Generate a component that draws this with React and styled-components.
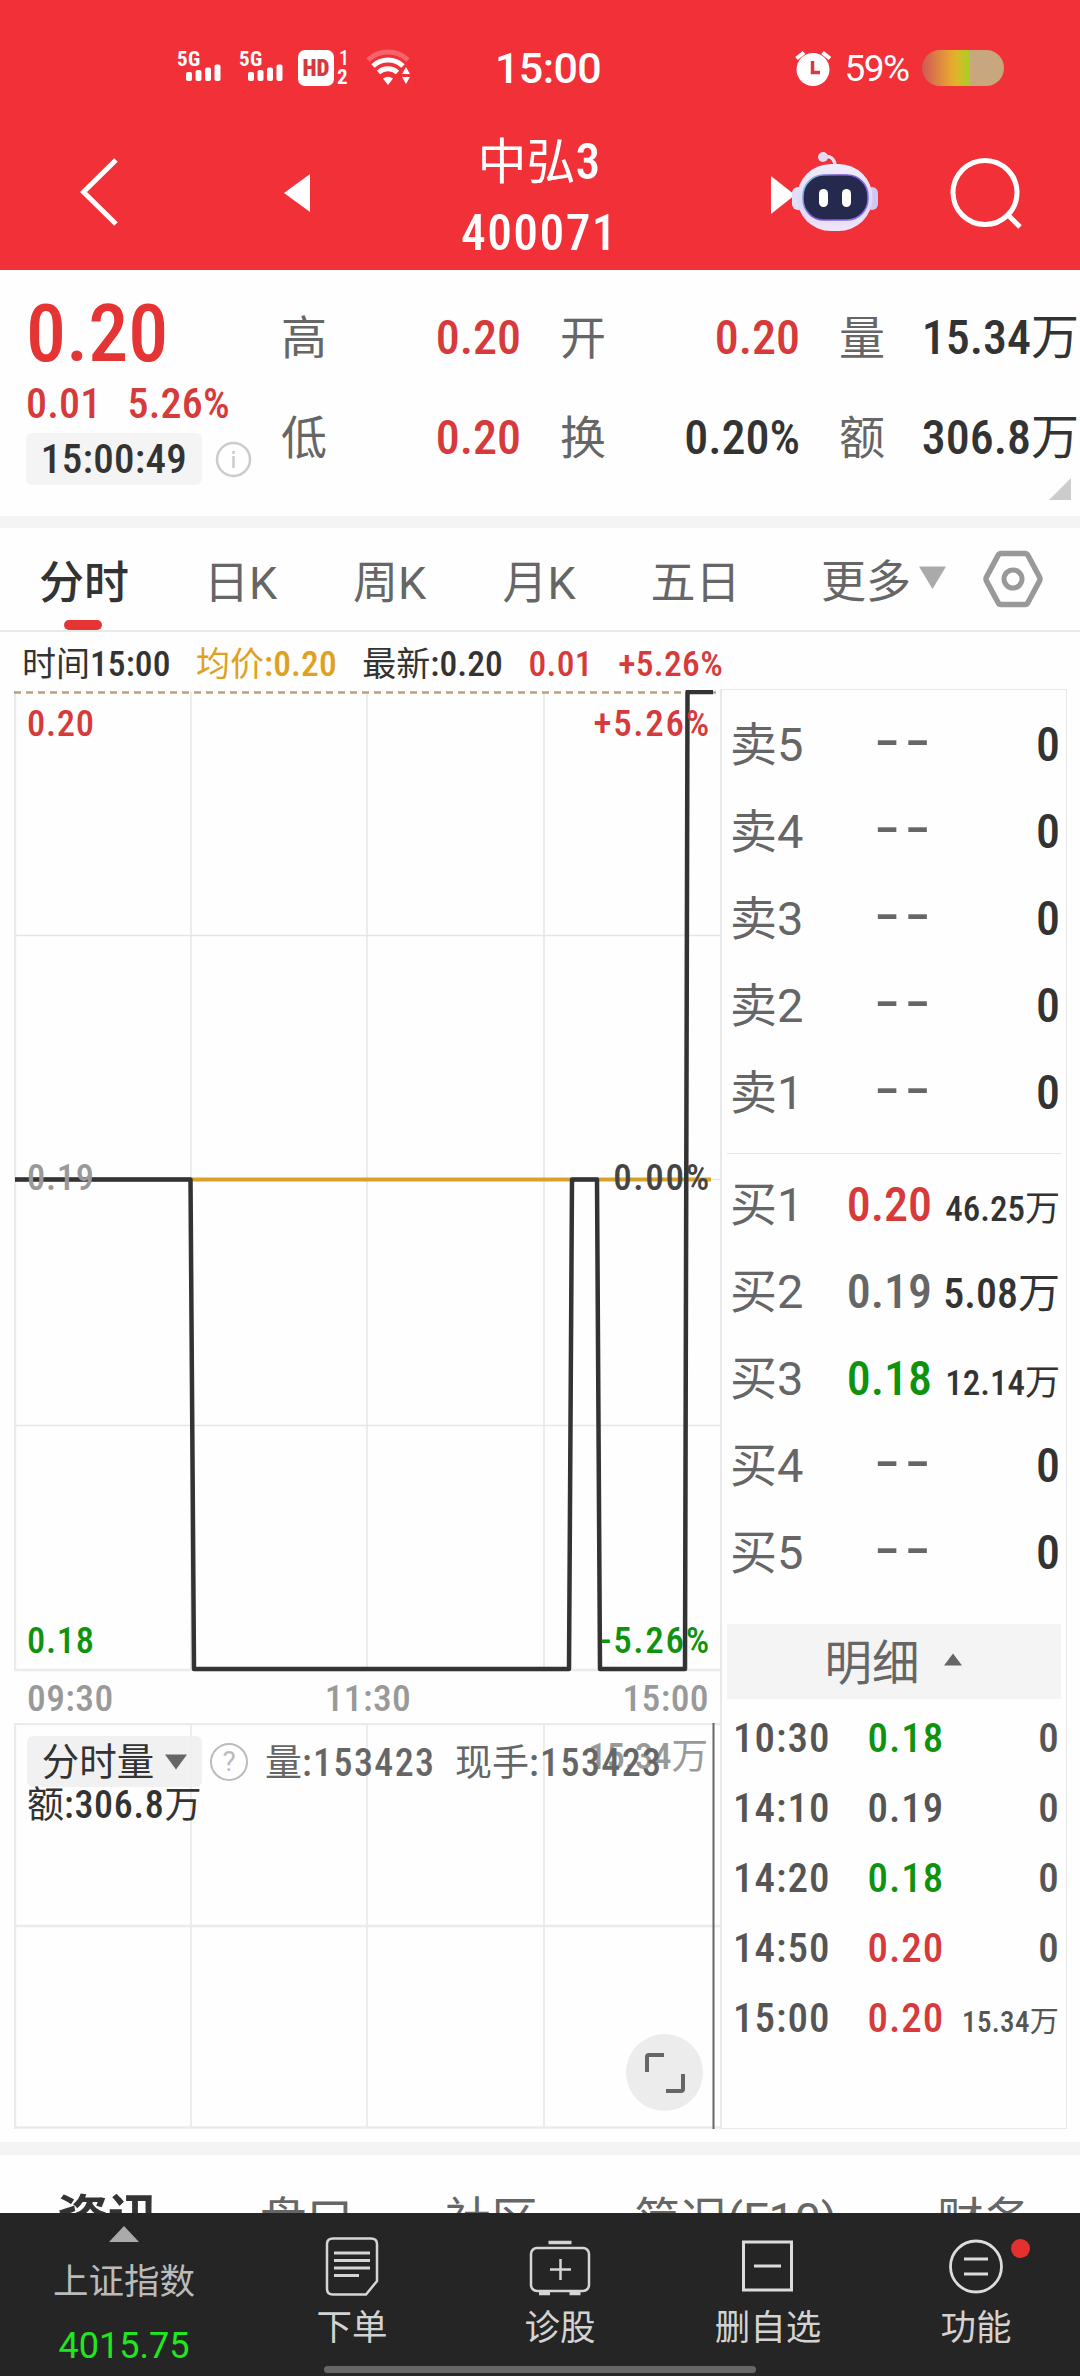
import styled, { createGlobalStyle } from "styled-components";

const RED = "#d63a3a";
const GREEN = "#0f930f";

const times = [
    { time: "10:30", price: "0.18", color: GREEN, amount: "0" },
    { time: "14:10", price: "0.19", color: "#555", amount: "0" },
    { time: "14:20", price: "0.18", color: GREEN, amount: "0" },
    { time: "14:50", price: "0.20", color: RED, amount: "0" },
    { time: "15:00", price: "0.20", color: RED, amount: "15.34万", size: 29 },
];

const sells = ["卖5", "卖4", "卖3", "卖2", "卖1"].map((name) => ({ name, amount: "0" }));

const buys = [
    { name: "买1", price: "0.20", color: RED, amount: "46.25万", size: 35 },
    { name: "买2", price: "0.19", color: "#666", amount: "5.08万", size: 42 },
    { name: "买3", price: "0.18", color: GREEN, amount: "12.14万", size: 35 },
    { name: "买4", amount: "0" },
    { name: "买5", amount: "0" },
];

const figures = [
    [{ label: "高", value: "0.20", color: RED }, { label: "开", value: "0.20", color: RED }, { label: "量", value: "15.34万" }],
    [{ label: "低", value: "0.20", color: RED }, { label: "换", value: "0.20%" }, { label: "额", value: "306.8万" }],
];

const Num = ({ children }) => {
    const [digits, unit] = children.split("万");
    return <>{digits}{unit !== undefined && <Unit>万</Unit>}</>;
};

const Signal = () => (
    <SignalBox>
        <span>5G</span>
        <svg width="36" height="18" fill="#fff">
            <rect x="0" y="8" width="6" height="9" rx="2" />
            <rect x="9.5" y="6" width="6" height="11" rx="2" />
            <rect x="19" y="3.500" width="6" height="13.500" rx="2" />
            <rect x="28.500" y="0.500" width="6" height="16.500" rx="2" />
        </svg>
    </SignalBox>
);

const StatusBar = () => (
    <Status>
        <Signals>
            <Signal />
            <Signal />
            <Hd>HD</Hd>
            <Sims><span>1</span><b>2</b></Sims>
            <svg width="46" height="38" viewBox="0 0 46 38" fill="none">
                <path d="M2 11 A29 29 0 0 1 42 11" stroke="#fff" strokeOpacity="0.25" strokeWidth="5" />
                <path d="M7 17 A22 22 0 0 1 37 17" stroke="#fff" strokeWidth="5" />
                <path d="M12.500 23.500 A14 14 0 0 1 31.500 23.500" stroke="#fff" strokeWidth="5" />
                <path d="M17 29.500 Q22 26 27 29.500 L22 36 Z" fill="#fff" />
                <path d="M40 18 L44 25 H36 Z M40 35 L44 28 H36 Z" fill="#fff" />
            </svg>
        </Signals>
        <Clock>15:00</Clock>
        <Power>
            <svg width="36" height="38" viewBox="0 0 36 38">
                <circle cx="18" cy="20.500" r="16.500" fill="#fff" />
                <path d="M1.500 9.500 L9 3.500 M27.500 3.500 L35 9.500" stroke="#fff" strokeWidth="4" />
                <path d="M17.500 12 V23.500 H25" stroke="#d83a3e" strokeWidth="3.500" fill="none" />
            </svg>
            <span>59%</span>
            <Battery />
        </Power>
    </Status>
);

const Robot = () => (
    <svg width="110" height="90" viewBox="768 146 110 90">
        <defs>
            <linearGradient id="shell" x1="0" y1="0" x2="0" y2="1">
                <stop offset="0" stopColor="#f1edfb" />
                <stop offset="0.6" stopColor="#dcd8f6" />
                <stop offset="1" stopColor="#f0e6fa" />
            </linearGradient>
            <linearGradient id="rim" x1="0" y1="0" x2="1" y2="0.4">
                <stop offset="0" stopColor="#7fd6e2" />
                <stop offset="0.45" stopColor="#7a4fd0" />
                <stop offset="1" stopColor="#8a6cf0" />
            </linearGradient>
        </defs>
        <path d="M770 174 L794 193 L770 212 Z" fill="#fff" />
        <path d="M822 155 Q833 152 834.500 165" stroke="#e9e0f6" strokeWidth="3.500" fill="none" />
        <circle cx="822" cy="155" r="5" fill="#e2daf2" />
        <rect x="791" y="185" width="12" height="23" rx="6" fill="#e3def8" />
        <rect x="865" y="185" width="12" height="23" rx="6" fill="#cfc8f5" />
        <rect x="796" y="162" width="75.500" height="67" rx="34" fill="url(#shell)" />
        <rect x="802" y="173" width="65" height="45" rx="21" fill="#24294d" stroke="url(#rim)" strokeWidth="1.500" />
        <rect x="818" y="187" width="9" height="18" rx="4.500" fill="#fff" />
        <rect x="841" y="187" width="9" height="18" rx="4.500" fill="#fff" />
    </svg>
);

const Header = () => (
    <Top>
        <StatusBar />
        <TitleBar>
            <svg width="44" height="76" viewBox="0 0 44 76">
                <path d="M38 5 L5.500 37 L38 69" fill="none" stroke="#fff" strokeWidth="5" />
            </svg>
            <Prev width="26" height="38"><path d="M26 0 V38 L0 19 Z" fill="#fff" /></Prev>
            <Title>
                <div>中弘<b>3</b></div>
                <div><b>400071</b></div>
            </Title>
            <Robot />
            <svg width="76" height="76" viewBox="946 155 76 76">
                <circle cx="984" cy="192.500" r="32" fill="none" stroke="#fff" strokeWidth="5" />
                <path d="M1007 215 L1019 227" stroke="#fff" strokeWidth="5" />
            </svg>
        </TitleBar>
    </Top>
);

const Summary = () => (
    <Quote>
        <Latest>
            <Big>0.20</Big>
            <Change><span>0.01</span><span>5.26%</span></Change>
            <Stamp>
                <span>15:00:49</span>
                <svg width="37" height="37" fill="none" stroke="#ccc" strokeWidth="2.500">
                    <circle cx="18.500" cy="18.500" r="16.500" />
                    <path d="M18.500 10 V13 M18.500 15 V27" />
                </svg>
            </Stamp>
        </Latest>
        <Figures>
            {figures.map((row, index) => (
                <FigureRow key={index}>
                    {row.map((item) => (
                        <Figure key={item.label}>
                            <FigureName>{item.label}</FigureName>
                            <FigureValue $color={item.color}><Num>{item.value}</Num></FigureValue>
                        </Figure>
                    ))}
                </FigureRow>
            ))}
        </Figures>
        <Corner width="22" height="22"><path d="M22 0 V22 H0 Z" fill="#ccc" /></Corner>
    </Quote>
);

const Periods = () => (
    <Tabs>
        <Tab $active $w={124}>分时</Tab>
        <Tab $w={189}>日K</Tab>
        <Tab $w={109}>周K</Tab>
        <Tab $w={190}>月K</Tab>
        <Tab $w={123}>五日</Tab>
        <More>
            更多
            <svg width="28" height="24"><path d="M0 0.500 H27 L13.500 23 Z" fill="#aaa" /></svg>
        </More>
        <svg width="60" height="58" viewBox="0 0 60 58" fill="none" stroke="#999">
            <path d="M18 3.500 H42 Q44 3.500 45 5.500 L56.500 27 Q57.500 29 56.500 31 L45 52.500 Q44 54.500 42 54.500 H18 Q16 54.500 15 52.500 L3.500 31 Q2.500 29 3.500 27 L15 5.500 Q16 3.500 18 3.500 Z" strokeWidth="5.500" />
            <circle cx="30" cy="29" r="9" strokeWidth="5" />
        </svg>
    </Tabs>
);

const PriceChart = () => (
    <Chart width="706" height="982" viewBox="14 690 706 982">
        <path d="M15 935.500 H720 M15 1179.500 H720 M15 1425.500 H720 M191 692 V1670 M367 692 V1670 M544 692 V1670" stroke="#e6e6e6" strokeWidth="1.500" />
        <path d="M15 691 V1671 M14 1670 H720" stroke="#ebebeb" strokeWidth="2.500" />
        <path d="M14 692.500 H716" stroke="#b9a17c" strokeWidth="2.500" strokeDasharray="7 5" />
        <path d="M15 1179.500 H711" stroke="#d9a02c" strokeWidth="4" />
        <path d="M15 1179.500 H190.500 L194 1669 H569 L572 1179.500 H597 L600 1669 H685 L687.500 692 H713" fill="none" stroke="#333" strokeWidth="4.500" strokeLinejoin="round" />
        <text x="27" y="736" fill={RED}>0.20</text>
        <WideText x="711" y="736" fill={RED}>+5.26%</WideText>
        <text x="27" y="1190" fill="#999">0.19</text>
        <WideText x="711" y="1190" fill="#444">0.00%</WideText>
        <text x="27" y="1653" fill={GREEN}>0.18</text>
        <WideText x="711" y="1653" fill={GREEN}>-5.26%</WideText>
    </Chart>
);

const Volume = () => (
    <VolumeBox>
        <Grid width="706" height="406" viewBox="14 1723 706 406">
            <path d="M191 1724 V2128 M367 1724 V2128 M544 1724 V2128" stroke="#e6e6e6" strokeWidth="1.500" />
            <path d="M15 1723 V2129 M14 1724 H720 M14 1926 H720 M14 2127.500 H720" stroke="#ebebeb" strokeWidth="2.500" />
            <path d="M713.500 1723 V2129" stroke="#666" strokeWidth="2" />
        </Grid>
        <Peak><Num>15.34万</Num></Peak>
        <VolumeRow>
            <Picker>
                分时量
                <svg width="22" height="16"><path d="M0 0.500 H22 L11 15.500 Z" fill="#666" /></svg>
            </Picker>
            <Help>?</Help>
            <Stat $w={190}>量<b>:153423</b></Stat>
            <Stat>现手<b>:153423</b></Stat>
        </VolumeRow>
        <Turnover>额<b>:306.8</b>万</Turnover>
        <Expand>
            <svg width="42" height="42" fill="none" stroke="#666" strokeWidth="4">
                <path d="M3 20 V5 Q3 3 5 3 H20 M22 39 H37 Q39 39 39 37 V22" />
            </svg>
        </Expand>
    </VolumeBox>
);

const Order = ({ item }) => (
    <OrderRow>
        <OrderName>{item.name}</OrderName>
        {item.price ? <Price $color={item.color}>{item.price}</Price> : <Dashes>--</Dashes>}
        <Amount $size={item.size}><Num>{item.amount}</Num></Amount>
    </OrderRow>
);

const Book = () => (
    <BookPanel>
        {sells.map((item) => <Order key={item.name} item={item} />)}
        <Divider />
        {buys.map((item) => <Order key={item.name} item={item} />)}
        <DetailHead>
            明细
            <svg width="18" height="13"><path d="M0 12.500 L9 0.500 L18 12.500 Z" fill="#666" /></svg>
        </DetailHead>
        {times.map((item) => (
            <TradeRow key={item.time}>
                <span>{item.time}</span>
                <TradePrice $color={item.color}>{item.price}</TradePrice>
                <TradeAmount $size={item.size}><Num>{item.amount}</Num></TradeAmount>
            </TradeRow>
        ))}
    </BookPanel>
);

const BottomNav = () => (
    <Nav>
        <Index>
            <svg width="30" height="17"><path d="M0 17 L15 1 L30 17 Z" fill="#aaa" /></svg>
            <span>上证指数</span>
            <IndexValue>4015.75</IndexValue>
        </Index>
        <NavItem>
            <svg width="64" height="64" fill="none" stroke="#d5d5d5" strokeWidth="2.500">
                <path d="M13 5.500 H51 Q57 5.500 57 11 V48 L46 61.500 H13 Q7 61.500 7 56 V11 Q7 5.500 13 5.500 Z" />
                <path d="M14 20 H50 M14 27.500 H50 M14 35 H50 M14 42.500 H39" strokeWidth="3" />
            </svg>
            下单
        </NavItem>
        <NavItem>
            <svg width="64" height="64" fill="none" stroke="#d5d5d5" strokeWidth="2.500">
                <rect x="3" y="15" width="58" height="43" rx="6" />
                <path d="M20.500 9.500 H43.500 M11 60.500 H22 M41.500 60.500 H52.500" strokeWidth="3.500" />
                <path d="M22 36.500 H43 M32.500 26 V47" />
            </svg>
            诊股
        </NavItem>
        <NavItem>
            <svg width="64" height="64" fill="none" stroke="#dcdcdc" strokeWidth="3">
                <rect x="7.500" y="9" width="48" height="48" />
                <path d="M18 33 H45" />
            </svg>
            删自选
        </NavItem>
        <NavItem>
            <svg width="64" height="64" fill="none" stroke="#dcdcdc" strokeWidth="2.800">
                <circle cx="32" cy="33.500" r="25.500" />
                <path d="M20 26 H44 M20 41 H44" />
            </svg>
            功能
            <Dot />
        </NavItem>
        <HomeBar />
    </Nav>
);

export default function App() {
    return (
        <Page>
            <Global />
            <Header />
            <Summary />
            <Gap $h={12} />
            <Periods />
            <Prices>
                <span>时间<b>15:00</b></span>
                <Avg>均价<b>:0.20</b></Avg>
                <span>最新<b>:0.20</b></span>
                <Up>0.01</Up>
                <Up>+5.26%</Up>
            </Prices>
            <Main>
                <Charts>
                    <PriceChart />
                    <Axis><span>09:30</span><span>11:30</span><span>15:00</span></Axis>
                    <Volume />
                </Charts>
                <Book />
            </Main>
            <Gap $h={13} />
            <News>
                <NewsTab $active $w={203}>资讯</NewsTab>
                <NewsTab $w={185}>盘口</NewsTab>
                <NewsTab $w={189}>社区</NewsTab>
                <NewsTab $w={303}>简况(F10)</NewsTab>
                <NewsTab $w={94}>财务</NewsTab>
            </News>
            <BottomNav />
        </Page>
    );
}

const Global = createGlobalStyle`
    * {
        box-sizing: border-box;
    }
    body {
        margin: 0;
        background: #fff;
    }
    svg {
        display: block;
        flex-shrink: 0;
    }
    b {
        font-family: "Roboto Condensed", Roboto, sans-serif;
        font-weight: 500;
    }
`;

const digits = `
    font-family: "Roboto Condensed", Roboto, "Noto Sans CJK SC", sans-serif;
    font-weight: 500;
`;

const Page = styled.div`
    width: 1080px;
    height: 2376px;
    overflow: hidden;
    display: flex;
    flex-direction: column;
    background: #fefefe;
    color: #333;
    font-family: Roboto, "Noto Sans CJK SC", sans-serif;
    white-space: nowrap;
`;

const Unit = styled.span`
    font-weight: 400;
`;

const Top = styled.header`
    height: 270px;
    flex-shrink: 0;
    background: #f13038;
    color: #fff;
`;

const Status = styled.div`
    height: 134px;
    padding: 2px 76px 0 177px;
    display: grid;
    grid-template-columns: 318px 300px 1fr;
    align-items: center;
`;

const Signals = styled.div`
    display: flex;
    align-items: center;
`;

const SignalBox = styled.div`
    width: 62px;
    height: 38px;
    display: flex;
    flex-direction: column;
    span {
        height: 17px;
        font: bold 21px/20px "Roboto Condensed", sans-serif;
        letter-spacing: 0.5px;
    }
    svg {
        margin-left: 9px;
        margin-top: -2px;
    }
`;

const Hd = styled.div`
    width: 36px;
    height: 36px;
    margin-left: -3px;
    border-radius: 7px;
    background: #fff;
    color: #d8383d;
    text-align: center;
    font: 900 23px/37px "Roboto Condensed", sans-serif;
`;

const Sims = styled.div`
    width: 32px;
    display: flex;
    flex-direction: column;
    padding-left: 3px;
    font: 500 20px/19px "Roboto Condensed", sans-serif;
    b {
        font-weight: 700;
        font-size: 21px;
    }
    span {
        padding-left: 2px;
    }
`;

const Clock = styled.div`
    font-size: 43px;
    font-weight: 500;
    letter-spacing: -0.6px;
`;

const Power = styled.div`
    display: flex;
    align-items: center;
    justify-content: space-between;
    span {
        font-size: 37px;
        letter-spacing: -1.5px;
    }
`;

const Battery = styled.div`
    width: 82px;
    height: 36px;
    border-radius: 18px;
    background: linear-gradient(90deg, #d0585a 0, #e6a530 35%, #dfb52c 42%, #a6d022 58%, #c9a77e 58%);
`;

const TitleBar = styled.div`
    height: 136px;
    display: flex;
    align-items: center;
    padding: 0 57px 18px 78px;
`;

const Prev = styled.svg`
    margin-left: 162px;
`;

const Title = styled.div`
    width: 459px;
    padding: 9px 0 0;
    text-align: center;
    font-size: 49px;
    line-height: 71px;
    b {
        letter-spacing: 1.4px;
        font-size: 49.5px;
    }
    & + svg {
        margin-right: 68px;
    }
`;

const Quote = styled.section`
    position: relative;
    height: 246px;
    flex-shrink: 0;
    display: flex;
`;

const Latest = styled.div`
    ${digits}
    width: 281px;
    padding: 24px 0 0 26px;
    color: ${RED};
`;

const Big = styled.div`
    color: #e53434;
    font-size: 80px;
    line-height: 80px;
`;

const Change = styled.div`
    display: flex;
    gap: 26px;
    font-size: 42px;
    line-height: 59px;
    letter-spacing: 0.2px;
`;

const Stamp = styled.div`
    display: flex;
    align-items: center;
    gap: 13px;
    color: #333;
    span {
        width: 176px;
        height: 52px;
        border-radius: 6px;
        background: #f4f4f4;
        text-align: center;
        font-size: 41px;
        line-height: 53px;
        letter-spacing: 0.3px;
    }
`;

const Figures = styled.div`
    width: 798px;
    padding-top: 17px;
`;

const FigureRow = styled.div`
    display: flex;
    justify-content: space-between;
`;

const Figure = styled.div`
    width: 240px;
    height: 100px;
    display: flex;
    align-items: baseline;
    justify-content: space-between;
    line-height: 101px;
`;

const FigureName = styled.div`
    font-size: 46px;
    color: #666;
`;

const FigureValue = styled.div`
    ${digits}
    color: ${(p) => p.$color || "#333"};
    font-size: 48px;
`;

const Corner = styled.svg`
    position: absolute;
    right: 9px;
    bottom: 16px;
`;

const Gap = styled.div`
    height: ${(p) => p.$h}px;
    flex-shrink: 0;
    background: #f4f4f4;
`;

const Tabs = styled.nav`
    height: 104px;
    flex-shrink: 0;
    display: flex;
    align-items: center;
    border-bottom: 2px solid #e8e8e8;
    padding-left: 22px;
    font-size: 45px;
    color: #666;
`;

const Tab = styled.div`
    position: relative;
    width: ${(p) => p.$w}px;
    height: 102px;
    line-height: 111px;
    text-align: center;
    ${(p) => p.$active && `
        color: #333;
        font-weight: 500;
        &::after {
            content: "";
            position: absolute;
            left: 42px;
            bottom: 0;
            width: 38px;
            height: 10px;
            border-radius: 5px;
            background: #e53434;
        }
    `}
`;

const More = styled.div`
    display: flex;
    align-items: center;
    gap: 8px;
    width: 162px;
    margin-left: 64px;
    height: 102px;
    line-height: 111px;
    padding-top: 7px;
    svg {
        margin-top: -9px;
    }
`;

const Prices = styled.div`
    height: 58px;
    flex-shrink: 0;
    padding: 5px 0 0 22px;
    display: flex;
    gap: 25.5px;
    align-items: center;
    font-size: 34px;
    line-height: 58px;
    b {
        font-size: 35.5px;
        letter-spacing: 0.1px;
    }
`;

const Avg = styled.span`
    color: #e0a020;
`;

const Up = styled.span`
    ${digits}
    font-size: 35.5px;
    letter-spacing: 0.3px;
    color: ${RED};
`;

const Main = styled.main`
    display: flex;
    height: 1452px;
    flex-shrink: 0;
    padding-left: 14px;
`;

const Charts = styled.div`
    width: 706px;
`;

const Chart = styled.svg`
    text {
        ${digits}
        font-size: 36.5px;
        letter-spacing: 0.7px;
    }
`;

const WideText = styled.text`
    && {
        font-size: 37px;
        letter-spacing: 1.7px;
        text-anchor: end;
    }
`;

const Axis = styled.div`
    ${digits}
    height: 51px;
    display: grid;
    grid-template-columns: 1fr 1fr 1fr;
    padding: 0 11px 0 13px;
    font-size: 37.5px;
    line-height: 52px;
    letter-spacing: 0.4px;
    color: #999;
    span:nth-child(2) {
        text-align: center;
    }
    span:nth-child(3) {
        text-align: right;
    }
`;

const VolumeBox = styled.div`
    position: relative;
    height: 406px;
    padding: 13px 0 0 13px;
`;

const Grid = styled.svg`
    position: absolute;
    left: 0;
    top: 0;
`;

const Peak = styled.div`
    ${digits}
    position: absolute;
    right: 12px;
    top: 12px;
    font-size: 36.5px;
    line-height: 44px;
    color: #999;
`;

const VolumeRow = styled.div`
    position: relative;
    display: flex;
    align-items: center;
    height: 51px;
`;

const Picker = styled.div`
    width: 175px;
    height: 51px;
    border-radius: 6px;
    background: rgba(240, 240, 240, 0.9);
    display: flex;
    align-items: center;
    justify-content: center;
    gap: 11px;
    font-size: 37.5px;
    line-height: 48px;
`;

const Help = styled.div`
    width: 38px;
    height: 38px;
    margin: 0 17px 0 8px;
    border: 2.5px solid #bbb;
    border-radius: 50%;
    text-align: center;
    font-size: 28px;
    line-height: 34px;
    color: #bbb;
`;

const Stat = styled.div`
    width: ${(p) => p.$w || 210}px;
    padding-bottom: 3px;
    font-size: 37px;
    color: #666;
    b {
        font-size: 38px;
        letter-spacing: 1.4px;
    }
`;

const Turnover = styled.div`
    position: relative;
    font-size: 37px;
    line-height: 37px;
    b {
        font-size: 38px;
        letter-spacing: 0.7px;
    }
`;

const Expand = styled.div`
    position: absolute;
    left: 612px;
    top: 311px;
    width: 77px;
    height: 77px;
    border-radius: 50%;
    background: #ececec;
    display: flex;
    align-items: center;
    justify-content: center;
`;

const BookPanel = styled.aside`
    width: 347px;
    height: 1440px;
    margin-top: -1px;
    padding: 11px 5px 0;
    border: 1.5px solid #e8e8e8;
    border-left-width: 2px;
`;

const OrderRow = styled.div`
    height: 87px;
    display: flex;
    align-items: baseline;
    line-height: 87px;
    padding: 0 1px 0 3px;
`;

const OrderName = styled.div`
    width: 100px;
    font-size: 47px;
    color: #666;
`;

const Price = styled.div`
    ${digits}
    width: 102px;
    text-align: right;
    font-size: 48px;
    color: ${(p) => p.$color};
`;

const Dashes = styled.div`
    width: 105px;
    text-align: right;
    font-family: Inter, sans-serif;
    font-size: 58px;
    line-height: 56px;
    letter-spacing: 4px;
    color: #666;
`;

const Amount = styled.div`
    ${digits}
    flex: 1;
    display: flex;
    justify-content: flex-end;
    font-size: ${(p) => p.$size || 48}px;
`;

const Divider = styled.hr`
    margin: 17px 0 7px;
    border: 0;
    height: 1px;
    background: #e6e6e6;
`;

const DetailHead = styled.div`
    height: 75px;
    margin: 28px 0 4px;
    background: #f4f4f4;
    display: flex;
    align-items: center;
    justify-content: center;
    gap: 24px;
    font-size: 47.5px;
    line-height: 75px;
    padding: 6px 2px 0 0;
    color: #666;
    svg {
        margin-top: -11px;
    }
`;

const TradeRow = styled.div`
    ${digits}
    height: 70px;
    display: flex;
    align-items: baseline;
    line-height: 70px;
    padding: 0 2px 0 6px;
    font-size: 41px;
    letter-spacing: 1px;
    color: #555;
`;

const TradePrice = styled.div`
    flex: 1;
    padding-left: 37px;
    color: ${(p) => p.$color};
`;

const TradeAmount = styled.div`
    font-size: ${(p) => p.$size || 41}px;
    letter-spacing: 0.3px;
`;

const News = styled.div`
    height: 58px;
    flex-shrink: 0;
    overflow: hidden;
    display: flex;
    padding: 34px 0 0 57px;
    color: #666;
`;

const NewsTab = styled.div`
    width: ${(p) => p.$w}px;
    flex-shrink: 0;
    font-size: ${(p) => (p.$active ? 51 : 46.5)}px;
    line-height: 62px;
    ${(p) => p.$active && "color: #333; font-weight: 700;"}
`;

const Nav = styled.footer`
    position: relative;
    height: 163px;
    flex-shrink: 0;
    display: flex;
    background: #252525;
    color: #d3d3d3;
    font-size: 35.5px;
`;

const Index = styled.div`
    width: 248px;
    display: flex;
    flex-direction: column;
    align-items: center;
    padding-top: 12px;
    color: #bbb;
    line-height: 64px;
    span {
        margin-top: 8px;
    }
`;

const IndexValue = styled.div`
    color: #1fe81f;
    font-size: 36px;
`;

const NavItem = styled.div`
    position: relative;
    width: 208px;
    display: flex;
    flex-direction: column;
    align-items: center;
    padding-top: 20px;
    line-height: 62px;
`;

const Dot = styled.i`
    position: absolute;
    left: 139px;
    top: 26px;
    width: 19px;
    height: 19px;
    border-radius: 50%;
    background: #e53030;
`;

const HomeBar = styled.div`
    position: absolute;
    left: 324px;
    bottom: 3px;
    width: 432px;
    height: 7px;
    border-radius: 4px;
    background: #666;
`;
